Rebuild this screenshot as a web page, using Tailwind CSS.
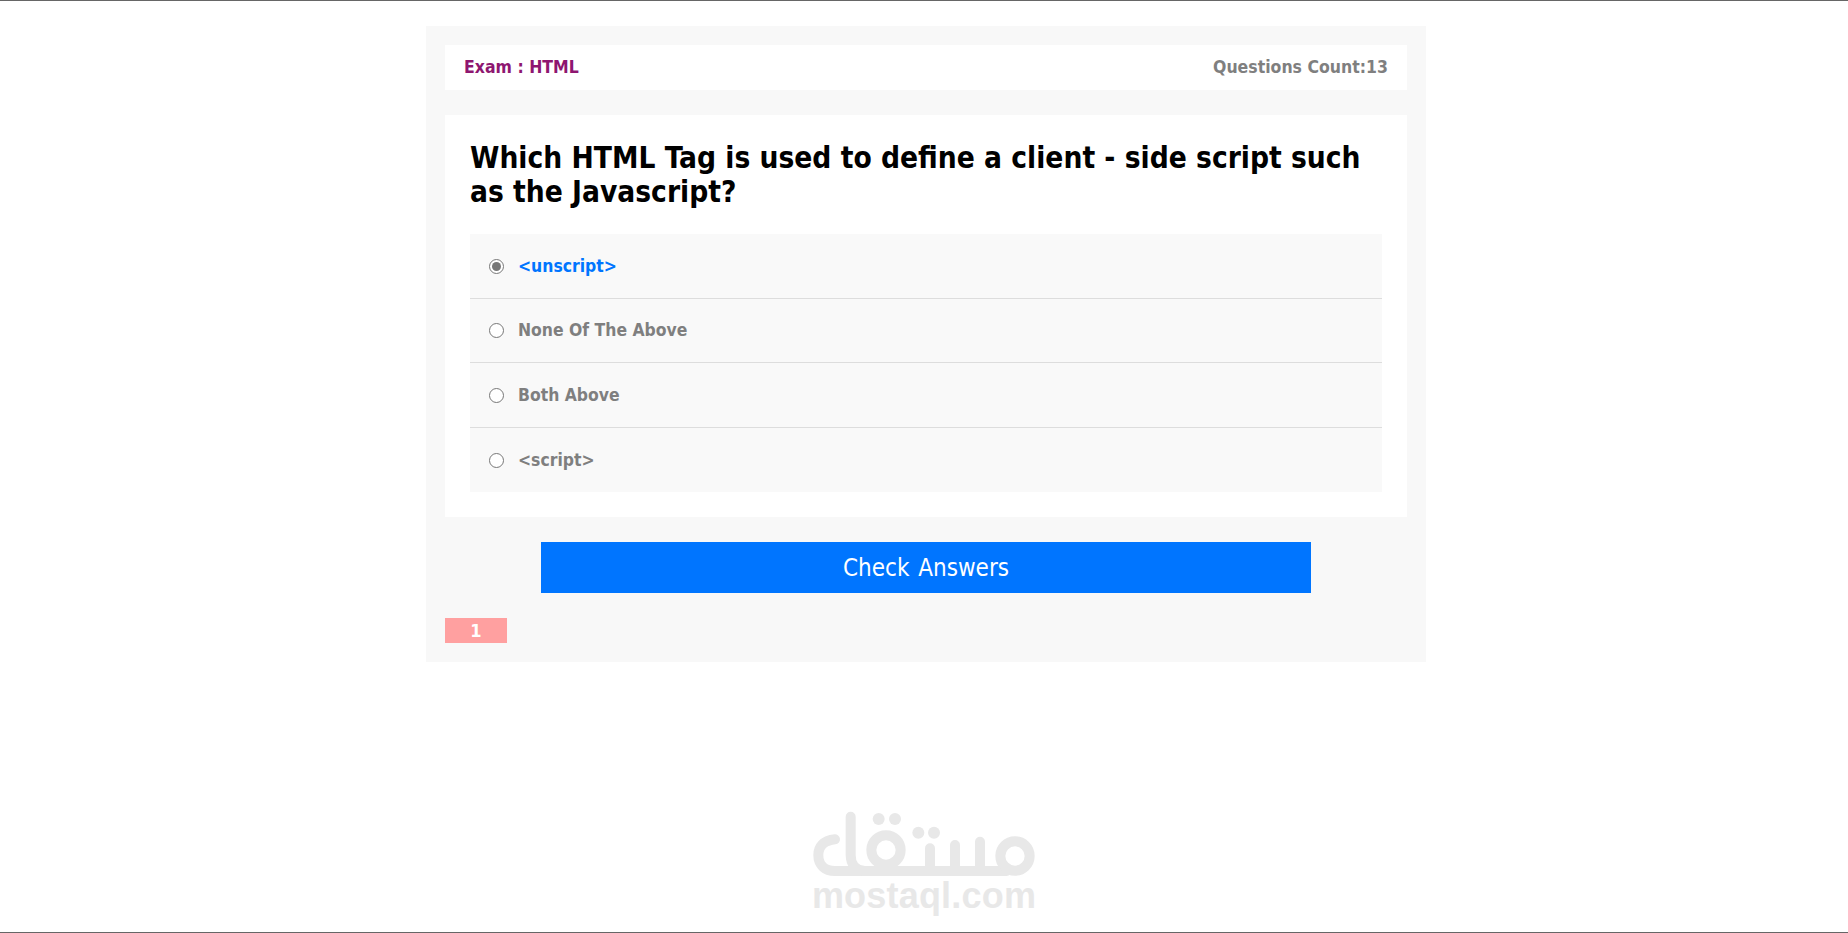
<!DOCTYPE html>
<html lang="en">
<head>
    <meta charset="UTF-8">
    <title>Quiz App</title>
    <script src="https://cdn.jsdelivr.net/npm/@tailwindcss/browser@4"></script>
</head>
<body class="bg-white h-[933px] overflow-hidden border-y border-[#666] font-['DejaVu_Sans_Condensed','DejaVu_Sans',sans-serif] relative">

    <div class="w-[1000px] ml-[426px] mt-[25px] bg-[#f8f8f8] p-[19px] h-[636px]">
        <div class="flex justify-between items-center bg-white h-[45px] px-[19px] text-[17.5px] font-bold">
            <div class="text-[#8e1670]">Exam : HTML</div>
            <div class="text-[#7f7f7f]">Questions Count:13</div>
        </div>

        <div class="bg-white mt-[25px] px-[25px] pt-[26px] pb-[25px]">
            <h2 class="text-[29.6px] leading-[34px] font-bold text-black">Which HTML Tag is used to define a client - side script such as the Javascript?</h2>
            <ul class="bg-[#f9f9f9] mt-[25px] text-[17.4px] font-bold text-[#7f7f7f]">
                <li class="flex items-center h-[65px] px-[19px] border-b border-[#ddd]">
                    <input type="radio" name="q" checked class="w-[15px] h-[15px] m-0 accent-[#777]">
                    <label class="ml-[14px] text-[#0075ff]">&lt;unscript&gt;</label>
                </li>
                <li class="flex items-center h-[64px] px-[19px] border-b border-[#ddd]">
                    <input type="radio" name="q" class="w-[15px] h-[15px] m-0">
                    <label class="ml-[14px]">None Of The Above</label>
                </li>
                <li class="flex items-center h-[65px] px-[19px] border-b border-[#ddd]">
                    <input type="radio" name="q" class="w-[15px] h-[15px] m-0">
                    <label class="ml-[14px]">Both Above</label>
                </li>
                <li class="flex items-center h-[64px] px-[19px]">
                    <input type="radio" name="q" class="w-[15px] h-[15px] m-0">
                    <label class="ml-[14px]">&lt;script&gt;</label>
                </li>
            </ul>
        </div>

        <button class="block w-[770px] h-[51px] mx-auto mt-[25px] bg-[#0075ff] text-white text-[24px] [word-spacing:2px]">Check Answers</button>

        <div class="flex mt-[25px]">
            <span class="w-[62px] h-[25px] bg-[#ffa0a0] text-white font-bold text-[18px] leading-[25px] text-center">1</span>
        </div>
    </div>

    <!-- watermark -->
    <div class="absolute left-[780px] top-[789px] w-[280px] h-[143px]">
        <svg class="w-[280px] h-[143px]" viewBox="0 0 840 429" fill="none" stroke="#e8e8e8" stroke-width="30" stroke-linecap="round">
            <path d="M165 148C128 152 115 172 115 195C115 225 135 243 165 243H680"/>
            <path d="M212 80V195C212 225 230 243 255 243"/>
            <circle cx="318" cy="180" r="44"/>
            <path d="M450 175V240M525 165V240M600 155V240"/>
            <circle cx="705" cy="198" r="44"/>
            <g fill="#e8e8e8" stroke="none">
                <circle cx="296" cy="87" r="18"/>
                <circle cx="345" cy="87" r="18"/>
                <circle cx="415" cy="128" r="18"/>
                <circle cx="462" cy="128" r="18"/>
            </g>
        </svg>
        <div class="absolute left-[30px] top-[86px] w-[228px] text-center text-[36px] leading-[40px] font-bold tracking-[0.2px] text-[#e8e8e8] font-['Liberation_Sans',sans-serif]">mostaql.com</div>
    </div>

</body>
</html>
